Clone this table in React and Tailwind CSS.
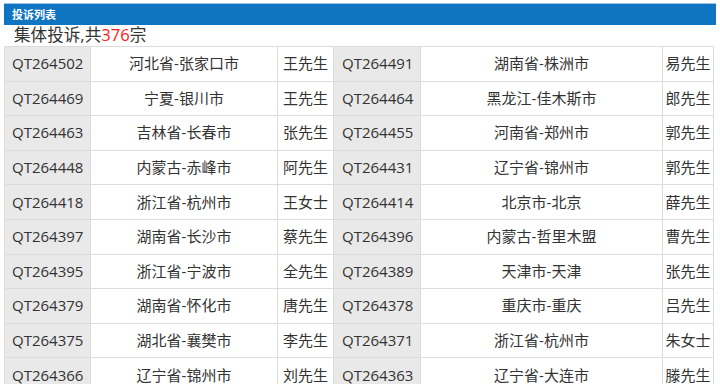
import React from "react";

const rows = [
  ["QT264502", "河北省-张家口市", "王先生", "QT264491", "湖南省-株洲市", "易先生"],
  ["QT264469", "宁夏-银川市", "王先生", "QT264464", "黑龙江-佳木斯市", "郎先生"],
  ["QT264463", "吉林省-长春市", "张先生", "QT264455", "河南省-郑州市", "郭先生"],
  ["QT264448", "内蒙古-赤峰市", "阿先生", "QT264431", "辽宁省-锦州市", "郭先生"],
  ["QT264418", "浙江省-杭州市", "王女士", "QT264414", "北京市-北京", "薛先生"],
  ["QT264397", "湖南省-长沙市", "蔡先生", "QT264396", "内蒙古-哲里木盟", "曹先生"],
  ["QT264395", "浙江省-宁波市", "全先生", "QT264389", "天津市-天津", "张先生"],
  ["QT264379", "湖南省-怀化市", "唐先生", "QT264378", "重庆市-重庆", "吕先生"],
  ["QT264375", "湖北省-襄樊市", "李先生", "QT264371", "浙江省-杭州市", "朱女士"],
  ["QT264366", "辽宁省-锦州市", "刘先生", "QT264363", "辽宁省-大连市", "滕先生"],
];

export default function App() {
  return (
    <div
      className="w-[720px] h-[384px] overflow-hidden bg-white text-[#333]"
      style={{ fontFamily: '"Open Sans", "Noto Sans CJK SC", sans-serif' }}
    >
      <div className="pt-[3px] pl-[4px] pr-[4px]">
        <div className="h-[22px] bg-[#0f74c2] border-t border-[#9cc3e3] flex items-center pl-[8px]">
          <span className="text-white text-[11px] font-bold leading-none">投诉列表</span>
        </div>
        <div className="h-[21px] flex items-center pl-[10px] text-[16.6px] leading-none text-[#333]">
          集体投诉,共<span className="text-[#ff1a1a]">376</span>宗
        </div>
        <table className="border-collapse text-[15px] leading-none table-fixed w-[709px]">
          <colgroup>
            <col className="w-[86px]" />
            <col className="w-[187px]" />
            <col className="w-[56px]" />
            <col className="w-[87px]" />
            <col className="w-[242px]" />
            <col className="w-[51px]" />
          </colgroup>
          <tbody>
            {rows.map((r, i) => (
              <tr key={i} className="h-[34.6px]">
                <td className="bg-[#e9e9e9] border border-[#dcdcdc] pl-[7px] whitespace-nowrap">{r[0]}</td>
                <td className="border border-[#dcdcdc] text-center whitespace-nowrap">{r[1]}</td>
                <td className="border border-[#dcdcdc] text-center whitespace-nowrap">{r[2]}</td>
                <td className="bg-[#e9e9e9] border border-[#dcdcdc] pl-[8px] whitespace-nowrap">{r[3]}</td>
                <td className="border border-[#dcdcdc] text-center whitespace-nowrap">{r[4]}</td>
                <td className="border border-[#dcdcdc] text-center whitespace-nowrap">{r[5]}</td>
              </tr>
            ))}
          </tbody>
        </table>
      </div>
    </div>
  );
}
